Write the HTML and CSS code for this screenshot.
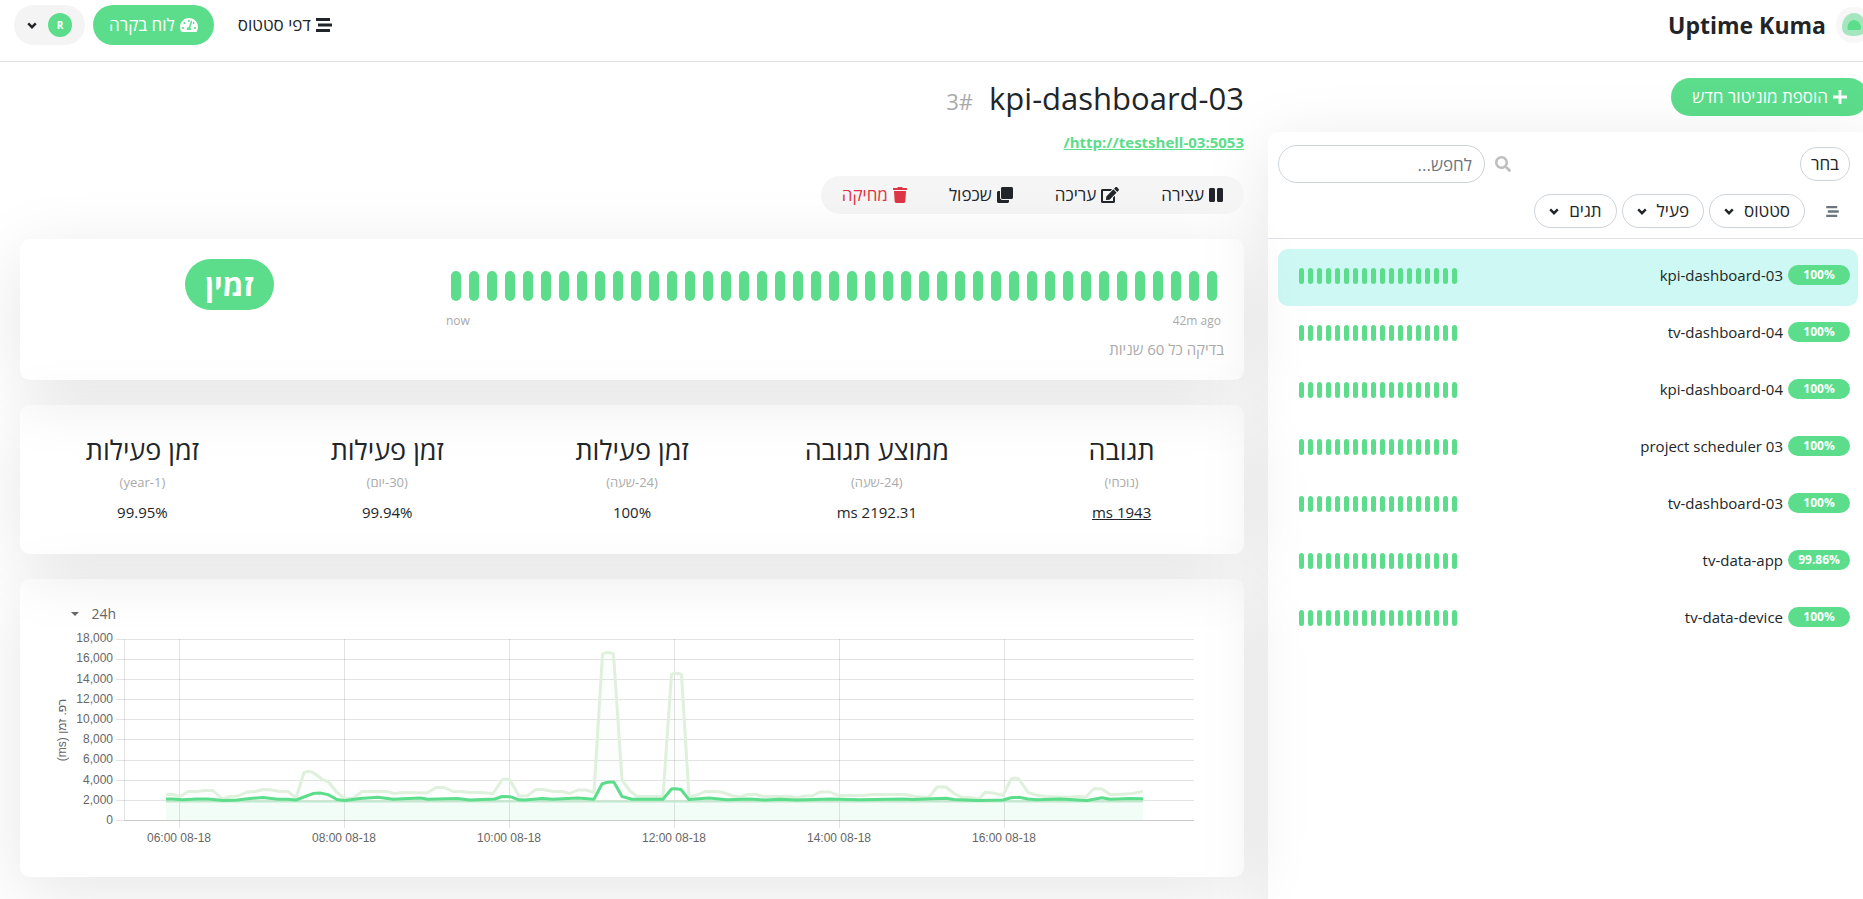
FILE: index.html
```html
<!DOCTYPE html>
<html lang="he" dir="rtl">
<head>
<meta charset="utf-8">
<title>Uptime Kuma</title>
<link rel="stylesheet" href="styles.css">
</head>
<body>
<svg class="defs" aria-hidden="true">
  <symbol id="stream" viewBox="0 0 16 14"><path d="M0 0h14v3H0zM2 5.500h14v3H2zM0 11h14v3H0z"/></symbol>
  <symbol id="gauge" viewBox="0 0 576 512"><path d="M288 32C128.940 32 0 160.940 0 320c0 52.800 14.250 102.260 39.060 144.800 5.610 9.620 16.300 15.200 27.440 15.200h443c11.140 0 21.830-5.580 27.440-15.200C561.750 422.260 576 372.800 576 320c0-159.060-128.940-288-288-288zm0 64c14.710 0 26.580 10.130 30.320 23.650-1.110 2.260-2.640 4.230-3.450 6.670l-9.220 27.670c-5.130 3.490-10.970 6.010-17.640 6.010-17.670 0-32-14.330-32-32S270.330 96 288 96zM96 384c-17.670 0-32-14.330-32-32s14.330-32 32-32 32 14.330 32 32-14.330 32-32 32zm48-160c-17.670 0-32-14.330-32-32s14.330-32 32-32 32 14.330 32 32-14.330 32-32 32zm246.770-72.410l-61.330 184C343.130 347.330 352 364.540 352 384c0 11.720-3.380 22.550-8.880 32H232.880c-5.500-9.450-8.880-20.280-8.880-32 0-33.940 26.500-61.430 59.900-63.590l61.340-184.010c4.170-12.560 17.730-19.450 30.360-15.170 12.570 4.190 19.350 17.790 15.170 30.360zm14.660 57.200l15.520-46.550c3.470-1.290 7.130-2.230 11.050-2.230 17.670 0 32 14.330 32 32s-14.330 32-32 32c-11.380-.010-20.890-6.280-26.570-15.220zM480 384c-17.670 0-32-14.330-32-32s14.330-32 32-32 32 14.330 32 32-14.330 32-32 32z"/></symbol>
  <symbol id="pause" viewBox="0 0 448 512"><path d="M144 479H48c-26.500 0-48-21.500-48-48V79c0-26.500 21.500-48 48-48h96c26.500 0 48 21.500 48 48v352c0 26.500-21.500 48-48 48zm304-48V79c0-26.500-21.500-48-48-48h-96c-26.500 0-48 21.500-48 48v352c0 26.500 21.500 48 48 48h96c26.500 0 48-21.500 48-48z"/></symbol>
  <symbol id="edit" viewBox="0 0 576 512"><path d="M402.600 83.200l90.200 90.200c3.800 3.800 3.800 10 0 13.800L274.400 405.600l-92.800 10.300c-12.400 1.400-22.900-9.100-21.500-21.500l10.300-92.800L388.800 83.200c3.800-3.800 10-3.800 13.800 0zm162-22.900l-48.800-48.800c-15.200-15.200-39.900-15.200-55.200 0l-35.400 35.400c-3.800 3.800-3.800 10 0 13.800l90.200 90.200c3.800 3.800 10 3.800 13.800 0l35.400-35.400c15.200-15.300 15.200-40 0-55.200zM384 346.200V448H64V128h229.800c3.200 0 6.200-1.300 8.500-3.500l40-40c7.600-7.600 2.200-20.500-8.500-20.500H48C21.500 64 0 85.500 0 112v352c0 26.500 21.500 48 48 48h352c26.500 0 48-21.500 48-48V306.200c0-10.700-12.900-16-20.500-8.500l-40 40c-2.200 2.300-3.500 5.300-3.500 8.500z"/></symbol>
  <symbol id="clone" viewBox="0 0 512 512"><path d="M464 0c26.510 0 48 21.490 48 48v288c0 26.510-21.490 48-48 48H176c-26.510 0-48-21.490-48-48V48c0-26.510 21.490-48 48-48h288M176 416c-44.112 0-80-35.888-80-80V128H48c-26.510 0-48 21.490-48 48v288c0 26.510 21.490 48 48 48h288c26.510 0 48-21.490 48-48v-48H176z"/></symbol>
  <symbol id="trash" viewBox="0 0 448 512"><path d="M432 32H312l-9.400-18.700A24 24 0 0 0 281.100 0H166.800a23.720 23.720 0 0 0-21.400 13.300L136 32H16A16 16 0 0 0 0 48v32a16 16 0 0 0 16 16h416a16 16 0 0 0 16-16V48a16 16 0 0 0-16-16zM53.200 467a48 48 0 0 0 47.900 45h245.800a48 48 0 0 0 47.900-45L416 128H32z"/></symbol>
  <symbol id="search" viewBox="0 0 512 512"><path d="M505 442.700L405.300 343c-4.500-4.500-10.600-7-17-7H372c27.600-35.300 44-79.700 44-128C416 93.100 322.900 0 208 0S0 93.100 0 208s93.100 208 208 208c48.300 0 92.700-16.400 128-44v16.300c0 6.400 2.500 12.500 7 17l99.700 99.700c9.400 9.400 24.600 9.400 33.900 0l28.300-28.300c9.400-9.400 9.400-24.600.1-34zM208 336c-70.700 0-128-57.200-128-128 0-70.700 57.200-128 128-128 70.700 0 128 57.200 128 128 0 70.700-57.200 128-128 128z"/></symbol>
  <symbol id="angle" viewBox="0 0 10 7"><path d="M1.200 1.400 5 5.200 8.800 1.400" fill="none" stroke="currentColor" stroke-width="2.400"/></symbol>
  <symbol id="plus" viewBox="0 0 14 14"><path d="M5.600 0h2.800v5.600H14v2.800H8.400V14H5.600V8.400H0V5.600h5.600z"/></symbol>
</svg>

<div class="page">
  <header class="topbar">
    <a class="brand" href="#">
      <svg class="logo" viewBox="0 0 36 36" aria-hidden="true">
        <rect width="36" height="36" rx="17" fill="#f7f7f7"/>
        <path d="M18 6c7 0 12 6.500 12 14.500 0 6-4.500 8.500-12 8.500S6 26.500 6 20.500C6 12.500 11 6 18 6z" fill="#a4e6be"/>
        <path d="M18 13c4 0 7 4 7 8 0 1.500-1 2-2 2H13c-1 0-1.500-.5-1.500-2 0-4 2.500-8 6.500-8z" fill="#5cdd8b"/>
      </svg>
      <span>Uptime Kuma</span>
    </a>
    <nav class="nav">
      <a class="nav-link" href="#"><svg class="ic-stream"><use href="#stream"/></svg>דפי סטטוס</a>
      <a class="nav-link active" href="#"><svg class="ic-wide"><use href="#gauge"/></svg>לוח בקרה</a>
      <button class="profile" type="button" aria-label="R"><span class="avatar">R</span><svg class="ic-angle"><use href="#angle"/></svg></button>
    </nav>
  </header>

  <main class="layout">
    <aside class="side">
      <a class="add" href="#"><svg class="ic-plus"><use href="#plus"/></svg>הוספת מוניטור חדש</a>
      <section class="box list-box">
        <div class="list-head">
          <div class="row">
            <button class="pill" type="button">בחר</button>
            <form class="search">
              <label for="q" aria-label="search"><svg class="ic-search"><use href="#search"/></svg></label>
              <input id="q" type="text" placeholder="לחפש...">
            </form>
          </div>
          <div class="row filters">
            <button class="stack" type="button" aria-label="clear"><svg class="ic-small"><use href="#stream"/></svg></button>
            <button class="pill filter" type="button">סטטוס<svg class="ic-angle"><use href="#angle"/></svg></button>
            <button class="pill filter" type="button">פעיל<svg class="ic-angle"><use href="#angle"/></svg></button>
            <button class="pill filter" type="button">תגים<svg class="ic-angle"><use href="#angle"/></svg></button>
          </div>
        </div>
        <div class="list">
          <a class="item selected" href="#"><span class="badge">100%</span><span class="name">kpi-dashboard-03</span><span class="mini" data-beats="18"></span></a>
          <a class="item" href="#"><span class="badge">100%</span><span class="name">tv-dashboard-04</span><span class="mini" data-beats="18"></span></a>
          <a class="item" href="#"><span class="badge">100%</span><span class="name">kpi-dashboard-04</span><span class="mini" data-beats="18"></span></a>
          <a class="item" href="#"><span class="badge">100%</span><span class="name">project scheduler 03</span><span class="mini" data-beats="18"></span></a>
          <a class="item" href="#"><span class="badge">100%</span><span class="name">tv-dashboard-03</span><span class="mini" data-beats="18"></span></a>
          <a class="item" href="#"><span class="badge">99.86%</span><span class="name">tv-data-app</span><span class="mini" data-beats="18"></span></a>
          <a class="item" href="#"><span class="badge">100%</span><span class="name">tv-data-device</span><span class="mini" data-beats="18"></span></a>
        </div>
      </section>
    </aside>

    <section class="content">
      <h1 class="title"><span>kpi-dashboard-03</span><span class="monitor-id"><span>#</span><span>3</span></span></h1>
      <p class="url"><a href="#">http://testshell-03:5053/</a></p>
      <div class="actions">
        <button type="button"><svg class="ic-mid"><use href="#pause"/></svg>עצירה</button>
        <button type="button"><svg class="ic-wide"><use href="#edit"/></svg>עריכה</button>
        <button type="button"><svg class="ic-sq"><use href="#clone"/></svg>שכפול</button>
        <button type="button" class="danger"><svg class="ic-mid"><use href="#trash"/></svg>מחיקה</button>
      </div>

      <div class="box status">
        <div class="beats-col">
          <div class="beats" data-beats="43"></div>
          <div class="times"><span>42m ago</span><span>now</span></div>
          <div class="interval">בדיקה כל 60 שניות</div>
        </div>
        <div class="state-col"><span class="state">זמין</span></div>
      </div>

      <div class="box stats">
        <div class="stat"><h4>תגובה</h4><p>(נוכחי)</p><a href="#">1943 ms</a></div>
        <div class="stat"><h4>ממוצע תגובה</h4><p>(24-שעה)</p><span>2192.31 ms</span></div>
        <div class="stat"><h4>זמן פעילות</h4><p>(24-שעה)</p><span>100%</span></div>
        <div class="stat"><h4>זמן פעילות</h4><p>(30-יום)</p><span>99.94%</span></div>
        <div class="stat"><h4>זמן פעילות</h4><p>(1-year)</p><span>99.95%</span></div>
      </div>

      <div class="box chart">
        <div class="period">
          <select aria-label="period"><option>24h</option></select>
          <svg class="ic-caret" viewBox="0 0 8 4" aria-hidden="true"><path d="M0 0h8L4 4z"/></svg>
        </div>
        <svg class="plot" viewBox="45 630 1174 220" direction="ltr">
          <g stroke="#000" stroke-opacity=".11" fill="none">
            <path d="M116 639.500H1194M116 659.500H1194M116 679.500H1194M116 699.500H1194M116 719.500H1194M116 739.500H1194M116 760.500H1194M116 780.500H1194M116 800.500H1194M116 820.500H1194"/>
            <path d="M124.500 639V820M179.500 639V828M344.500 639V828M509.500 639V828M674.500 639V828M839.500 639V828M1004.500 639V828"/>
            <path d="M124 820.500H1194"/>
          </g>
          <path fill="#5cdd8b" fill-opacity=".07" d="M166 802H1143V820H166z"/>
          <path class="line-max" d="M166 794.500 173 794.500 180 796.500 188 791.500 197 791.500 205 790.500 213 790.500 222 799 230 796.500 238 796 247 792 255 791.500 263 789.500 272 790 280 791.500 288 791.500 296 798 304 772.500Q308 770.500 313 772.500L322 779 329 782.500 337 792.500 345 798.500 353 798.500 362 791.500 387 791.500 394 793.500 403 792.500 427 793 436 787.500 444 787.500 453 791.500 461 791.500 470 792.500 480 792.500 493 793.500 502 780Q506 778 510 780L519 796 527 796 536 789.500 543 789.500 553 791.500 562 791.500 570 793.500 578 790 586 790 594 792.500 602.500 654Q608 651 613.500 654L622 780 630 791 637 796.500 663 796.500 671.500 674.500Q676 672 681.500 674.500L689 797 697 795 705 791.500 717 791.500 723 792.500 733 796 740 797 748 794.500 756 794.500 763 796.500 790 796.500 797 798 805 796 812 796 820 792 830 792 838 795.500 863 795.500 872 794.500 905 794.500 915 796.500 929 797.500 937 787 946 787 954 793.500 962 797.500 970 797.500 979 799 985 792.500 993 793 1003 795.500 1011 779Q1015 777 1019 779L1028 792.500 1036 795 1045 796.500 1070 797.500 1078 796.500 1086 797 1094 788.500 1102 789 1110 794.500 1118 794.500 1133 793.500 1143 791.500"/>
          <path class="line-min" d="M166 801.500H1143"/>
          <path class="line-avg" d="M166 799 173 799 182 799.800 197 799 208 799 223 800.500 237 800 250 798.600 263 797.500 278 799.300 288 799.300 296 800 304 797 313 793.600 320 793 328 794.600 337 799.500 345 800.500 360 798.400 378 797.200 393 799.200 420 798 428 799.200 457 798.600 470 800 495 799 502 796.500 510 796.700 519 799.800 525 800 542 798.500 553 799.200 578 798 594 799.300 602 784Q608 781.500 614 782.300L622 796.500 632 799.200 663 799.200 671.500 789Q676 788.500 681 789.500L689 799.600 709 798 727 799.800 750 799 765 800 780 799.200 797 800 830 799 860 799.800 903 799 913 799.600 946 798.200 954 799.600 978 800.400 1003 800 1011 797.700 1019 797.200 1028 799 1037 799.800 1060 799 1087 800.400 1102 797.700 1110 799.200 1130 798.500 1143 798.700"/>
          <g class="tick tick-y">
            <text x="113" y="642">18,000</text><text x="113" y="662">16,000</text><text x="113" y="683">14,000</text><text x="113" y="703">12,000</text><text x="113" y="723">10,000</text><text x="113" y="743">8,000</text><text x="113" y="763">6,000</text><text x="113" y="784">4,000</text><text x="113" y="804">2,000</text><text x="113" y="824">0</text>
          </g>
          <g class="tick tick-x">
            <text x="179" y="842">06:00 08-18</text><text x="344" y="842">08:00 08-18</text><text x="509" y="842">10:00 08-18</text><text x="674" y="842">12:00 08-18</text><text x="839" y="842">14:00 08-18</text><text x="1004" y="842">16:00 08-18</text>
            <text direction="rtl" transform="translate(66 730) rotate(-90)">רפ. זמן (ms)</text>
          </g>
        </svg>
      </div>
    </section>
  </main>
</div>
<script src="beats.js"></script>
</body>
</html>
```
FILE: styles.css
```css
* { box-sizing: border-box; }
body {
  margin: 0;
  background: #fff;
  color: #212529;
  font-family: "Open Sans", "Noto Sans", "Liberation Sans", sans-serif;
  font-size: 15px;
  line-height: 24px;
}
h1, h4, p { margin: 0; font-weight: 500; }
a { color: inherit; text-decoration: none; }
button, input, select { font: inherit; color: inherit; margin: 0; }
button { border: 0; background: none; cursor: pointer; }
svg { fill: currentColor; flex: none; }
.defs { position: absolute; width: 0; height: 0; }
.ic-stream { width: 16px; height: 14px; }
.ic-wide { width: 18px; height: 16px; }
.ic-sq, .ic-search { width: 16px; height: 16px; }
.ic-mid { width: 14px; height: 16px; }
.ic-plus { width: 14px; height: 14px; }
.ic-small { width: 13px; height: 11px; }
.ic-angle { width: 10px; height: 7px; }
.ic-caret { width: 8px; height: 4px; }

.page { min-height: 100vh; overflow: hidden; display: flex; flex-direction: column; }

/* Hebrew interface labels */
.nav-link, .add, .pill, .search input, .actions button { font-size: 17px; }

.topbar {
  display: flex;
  justify-content: space-between;
  align-items: flex-start;
  height: 62px;
  margin-right: -9px;
  padding: 5px 0 0 14px;
  border-bottom: 1px solid #dee2e6;
}
.brand { display: flex; align-items: center; gap: 10px; font-size: 23px; font-weight: 700; height: 40px; }
.logo { width: 36px; height: 36px; }
.nav { display: flex; gap: 8px; align-items: center; }
.nav-link { display: flex; align-items: center; gap: 5px; height: 40px; padding: 0 16px; border-radius: 20px; }
.nav-link.active { background: #5cdd8b; color: #fff; }
.profile { display: flex; align-items: center; gap: 11px; height: 40px; padding: 0 13px; border-radius: 20px; background: #f4f4f4; }
.avatar { width: 24px; height: 24px; border-radius: 12px; background: #5cdd8b; color: #fff; font-size: 10px; font-weight: 700; text-align: center; }

.layout {
  flex: 1;
  display: grid;
  grid-template-columns: 600fr 1224fr;
  gap: 24px;
  margin-right: -5px;
  padding: 16px 0 22px 20px;
}
.box { border-radius: 10px; box-shadow: 0 15px 70px rgba(0, 0, 0, .1); }

.side { display: flex; flex-direction: column; align-items: flex-start; min-width: 0; }
.add { display: flex; align-items: center; gap: 5px; height: 38px; padding: 0 21px; border-radius: 19px; background: #5cdd8b; color: #fff; }
.list-box { flex: 1; width: 100%; margin: 16px 0 -62px; }
.list-head { padding: 13px 18px 10px 10px; border-bottom: 1px solid #dee2e6; }
.row { display: flex; align-items: center; justify-content: space-between; }
.filters { justify-content: flex-start; gap: 5px; margin-top: 11px; }
.pill { height: 34px; padding: 0 10px; border: 1px solid #ced4da; border-radius: 17px; }
.filter { display: flex; align-items: center; gap: 10px; padding: 0 14px; }
.stack { display: flex; width: 40px; padding: 0 11px 0 0; color: #6c757d; }
.search { display: flex; align-items: center; gap: 10px; }
.search label { display: flex; color: #bfbfbf; }
.search input { width: 207px; height: 38px; padding: 0 12px; border: 1px solid #ced4da; border-radius: 19px; background: #fff; outline: 0; }
.search input::placeholder { color: #6c757d; opacity: 1; }
.list { padding: 10px; }
.item { display: flex; align-items: flex-start; height: 57px; padding: 16px 8px 0 21px; border-radius: 10px; }
.item.selected { background: #cdf8f4; }
.badge { width: 62px; height: 20px; border-radius: 10px; background: #5cdd8b; color: #fff; font-size: 12px; font-weight: 700; line-height: 20px; text-align: center; }
.name { flex: 1; margin-right: 5px; line-height: 20px; }
.mini { display: flex; gap: 4px; padding-top: 3px; }
.mini i { width: 5px; height: 16px; border-radius: 3px; background: #5cdd8b; }

.content { min-width: 0; }
.title { display: flex; align-items: baseline; gap: 16px; font-size: 31px; line-height: 40px; }
.monitor-id { display: inline-flex; font-size: 22px; line-height: 24px; color: #aaa; }
.url { margin-top: 12px; color: #5cdd8b; }
.url a { font-weight: 700; text-decoration: underline; }
.actions { display: flex; width: fit-content; margin-top: 22px; background: #f5f5f5; border-radius: 19px; }
.actions button { display: flex; align-items: center; gap: 5px; height: 38px; padding: 0 21px; }
.actions .danger { color: #dc3545; }
.box + .box, .actions + .box { margin-top: 25px; }

.status { display: grid; grid-template-columns: 805fr 403fr; padding: 20px 8px; height: 141px; }
.beats-col { padding: 12px 12px 0; color: #aaa; }
.beats { display: flex; justify-content: space-between; padding: 0 7px 0 8px; }
.beats i { width: 10px; height: 30px; border-radius: 5px; background: #5cdd8b; }
.times { display: flex; justify-content: space-between; padding: 8px 3px 0; font-size: 12px; }
.interval { font-size: 15px; margin-top: 4px; }
.state-col { text-align: center; }
.state { display: inline-block; height: 51px; padding: 0 20px; border-radius: 26px; background: #5cdd8b; color: #fff; font-size: 30px; line-height: 51px; font-weight: 700; }

.stats { display: grid; grid-template-columns: repeat(5, 1fr); padding: 29px 0; height: 149px; text-align: center; }
.stat h4 { font-size: 27px; line-height: 32px; }
.stat p { font-size: 13px; line-height: 20px; margin: 6px 0 8px; color: #aaa; }
.stat a { text-decoration: underline; }

.chart { padding: 25px 25px 27px; }
.period { display: flex; justify-content: flex-end; align-items: center; gap: 12px; padding-left: 26px; height: 20px; margin-bottom: 6px; color: #666; }
.period select { appearance: none; border: 0; padding: 0; background: none; font-size: 14px; }
.plot { display: block; width: 100%; height: auto; direction: ltr; }
.line-max { fill: #5cdd8b; fill-opacity: .02; stroke: #dff1dc; stroke-width: 3; stroke-linejoin: round; }
.line-min { fill: none; stroke: #c0e8cb; stroke-width: 2; }
.line-avg { fill: none; stroke: #5cdd8b; stroke-width: 3; stroke-linejoin: round; }
.tick { font-family: "Liberation Sans", Arial, sans-serif; font-size: 12px; fill: #666; }
.tick-y { text-anchor: end; }
.tick-x { text-anchor: middle; }
```
FILE: beats.js
```js
document.querySelectorAll("[data-beats]").forEach(function (bar) {
  for (var n = Number(bar.dataset.beats); n > 0; n--) {
    bar.appendChild(document.createElement("i"));
  }
});
```
